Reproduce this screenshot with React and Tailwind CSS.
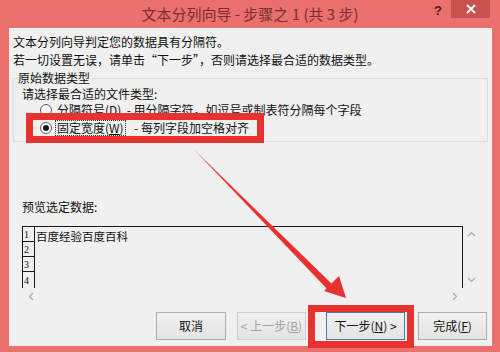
import React from 'react';

const FONT = { fontFamily: '"Noto Sans CJK SC", "Liberation Sans", sans-serif' };

function Radio({ checked }) {
    return (
        <span className="w-[12px] h-[12px] rounded-full border border-[#5c5c5c] bg-white flex items-center justify-center shrink-0">
            {checked && <span className="w-[6px] h-[6px] rounded-full bg-[#1a1a1a]" />}
        </span>
    );
}

function Btn({ children, className = '' }) {
    return (
        <div className={`h-[28px] flex items-center justify-center border bg-gradient-to-b from-[#f2f2f2] to-[#e3e3e3] text-[12px] ${className}`}>
            {children}
        </div>
    );
}

export default function App() {
    return (
        <div className="relative w-[500px] h-[352px] bg-[#e9706d] overflow-hidden text-[#111]" style={FONT}>
            {/* Title bar */}
            <div className="relative h-[28px] flex items-center justify-center text-[15px] text-[#7a2e2d]">
                文本分列向导 - 步骤之 1 (共 3 步)
                <span className="absolute left-[434px] top-[1px] text-[13px] font-bold text-[#4a1c1c]" style={{ fontFamily: '"Liberation Sans", sans-serif' }}>?</span>
                <div className="absolute left-[451px] top-0 w-[39px] h-[18px] bg-[#c85250] flex items-center justify-center">
                    <svg width="10" height="10" viewBox="0 0 10 10">
                        <path d="M1 1 L9 9 M9 1 L1 9" stroke="#fff" strokeWidth="1.8" />
                    </svg>
                </div>
            </div>

            {/* Body */}
            <div className="ml-[9px] mr-[8px] h-[318px] bg-[#f0f0f0] border-t border-r border-[#f8f8f8] flex flex-col pl-[4px] pt-[4px] text-[12px]">
                <div className="leading-[18px]">文本分列向导判定您的数据具有分隔符。</div>
                <div className="leading-[18px]">若一切设置无误，请单击“下一步”，否则请选择最合适的数据类型。</div>

                <fieldset className="w-[475px] border border-[#dcdcdc] pl-[4px] pb-[4px]">
                    <legend className="leading-[18px] pr-[2px]">原始数据类型</legend>
                    <div className="leading-[14px] pl-[4px]">请选择最合适的文件类型:</div>
                    <div className="h-[18px] flex items-center pl-[22px] gap-[5px]">
                        <Radio />
                        <span>分隔符号(<span className="underline">D</span>)&nbsp;&nbsp;- 用分隔字符，如逗号或制表符分隔每个字段</span>
                    </div>
                    <div className="h-[18px] flex items-center pl-[22px] gap-[3px]">
                        <Radio checked />
                        <span className="border border-dotted border-[#333] px-[1px] leading-[14px]">固定宽度(<span className="underline">W</span>)</span>
                        <span>&nbsp;&nbsp;- 每列字段加空格对齐</span>
                    </div>
                </fieldset>

                <div className="mt-[56px] pl-[9px] leading-[18px]">预览选定数据:</div>

                {/* Preview */}
                <div className="mt-[10px] ml-[9px] w-[458px] flex flex-col">
                    <div className="h-[62px] flex">
                        <div className="w-[441px] border-t border-l border-r border-[#1a1a1a] flex">
                            <div className="w-[12px] border-r border-[#1a1a1a] flex flex-col text-[10px] leading-none" style={{ fontFamily: '"Liberation Serif", serif' }}>
                                {['1', '2', '3', '4'].map((n) => (
                                    <div key={n} className="h-[15px] border-b border-[#1a1a1a] flex items-end pl-[1px] pb-[1px] last:border-b-0">{n}</div>
                                ))}
                            </div>
                            <div className="text-[11.5px] leading-[18px] pl-[1px] text-[#111]">百度经验百度百科</div>
                        </div>
                        <div className="flex-1 flex flex-col items-center justify-between py-[5px] text-[#a8a8a8]">
                            <svg width="9" height="6" viewBox="0 0 9 6"><path d="M1 5 L4.5 1.5 L8 5" fill="none" stroke="currentColor" strokeWidth="1.2" /></svg>
                            <svg width="9" height="6" viewBox="0 0 9 6"><path d="M1 1 L4.5 4.5 L8 1" fill="none" stroke="currentColor" strokeWidth="1.2" /></svg>
                        </div>
                    </div>
                    <div className="h-[16px] flex items-center justify-between pl-[6px] pr-[22px] text-[#a8a8a8]">
                        <svg width="6" height="9" viewBox="0 0 6 9"><path d="M5 1 L1.5 4.5 L5 8" fill="none" stroke="currentColor" strokeWidth="1.2" /></svg>
                        <svg width="6" height="9" viewBox="0 0 6 9"><path d="M1 1 L4.5 4.5 L1 8" fill="none" stroke="currentColor" strokeWidth="1.2" /></svg>
                    </div>
                </div>

                {/* Buttons */}
                <div className="mt-[8px] flex pl-[143px]">
                    <Btn className="w-[70px] border-[#adadad]">取消</Btn>
                    <Btn className="w-[69px] ml-[11px] border-[#cdcdcd] text-[#a3a3a3]">&lt; 上一步(<span className="underline">B</span>)</Btn>
                    <Btn className="w-[79px] ml-[20px] border-[#3c7fb1]">下一步(<span className="underline">N</span>) &gt;</Btn>
                    <Btn className="w-[69px] ml-[13px] border-[#adadad]">完成(<span className="underline">F</span>)</Btn>
                </div>
            </div>

            {/* Red highlight boxes */}
            <div className="absolute left-[26px] top-[113px] w-[238px] h-[30px] border-[7px] border-[#e8322f]" />
            <div className="absolute left-[308px] top-[305px] w-[106px] h-[43px] border-[7px] border-[#e8322f]" />

            {/* Arrow */}
            <svg className="absolute left-0 top-0 pointer-events-none" width="500" height="352" viewBox="0 0 500 352">
                <polygon points="193,148.6 194,149.4 335,287 330,292" fill="#e8322f" />
                <polygon points="346,298 324,291 339,276" fill="#e8322f" />
            </svg>
        </div>
    );
}
